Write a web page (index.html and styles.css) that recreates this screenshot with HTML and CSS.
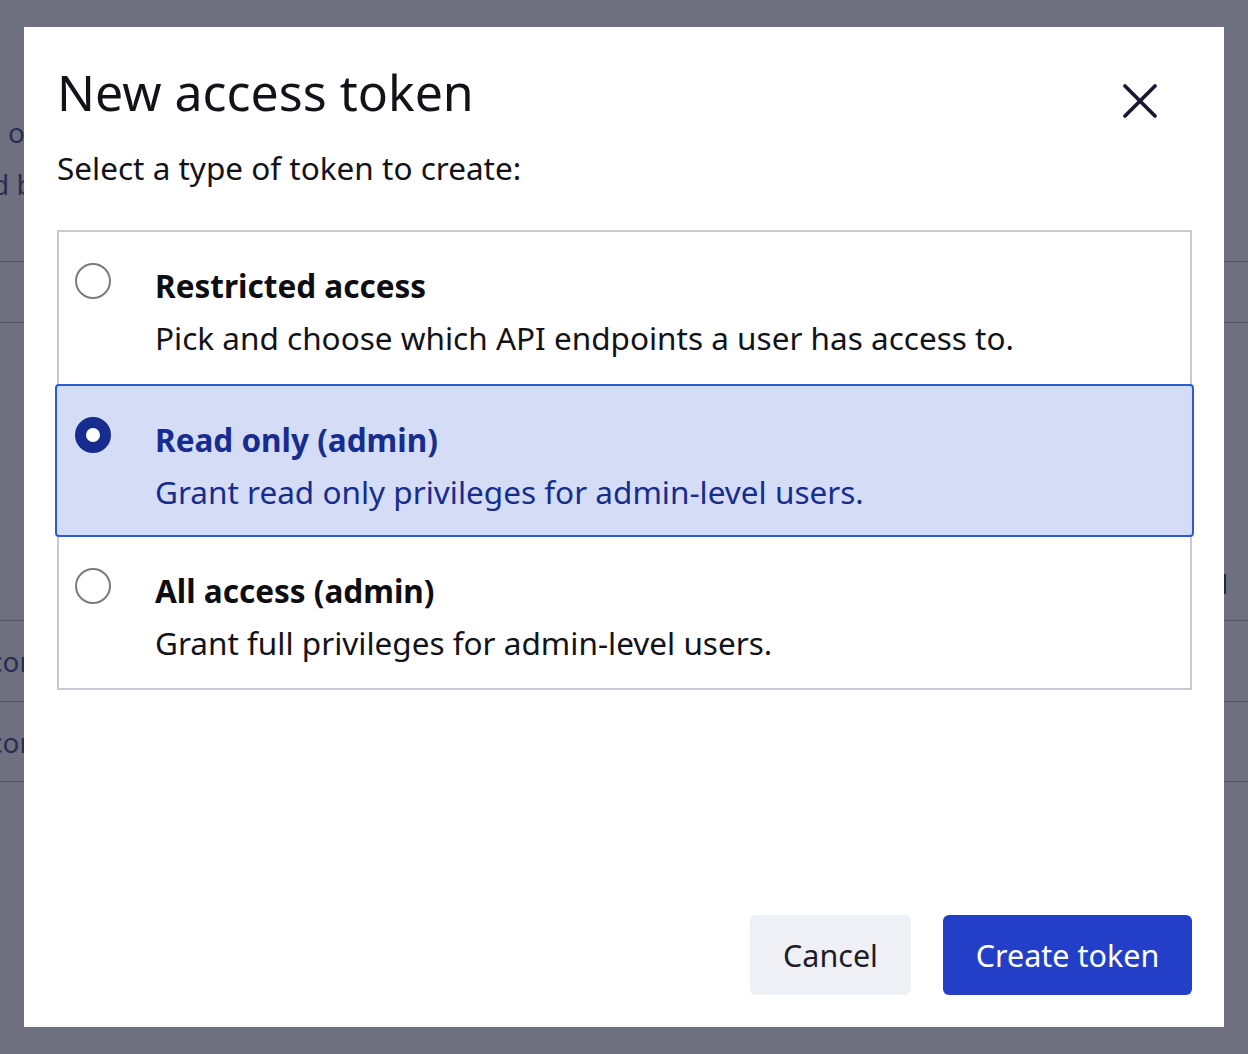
FILE: index.html
```html
<!DOCTYPE html>
<html lang="en">
<head>
<meta charset="utf-8">
<title>New access token</title>
<link rel="stylesheet" href="styles.css">
</head>
<body>
<div class="page">
  <p class="page-text line-a">of</p>
  <p class="page-text line-b">d b</p>
  <div class="page-table">
    <div class="page-row row-head"></div>
    <div class="page-row row-body"><span class="page-mark"></span></div>
    <div class="page-row row-item"><span class="cell">cor</span></div>
    <div class="page-row row-item"><span class="cell">cor</span></div>
  </div>
</div>

<div class="overlay">
  <div class="modal" role="dialog" aria-labelledby="modal-title">
    <div class="modal-header">
      <h1 id="modal-title" class="modal-title">New access token</h1>
      <button class="close-btn" aria-label="Close">
        <svg width="36" height="36" viewBox="0 0 36 36" fill="none" stroke="#191933" stroke-width="3.8" stroke-linecap="round">
          <path d="M3 3 L33 33 M33 3 L3 33"/>
        </svg>
      </button>
    </div>
    <p class="modal-sub">Select a type of token to create:</p>

    <div class="options">
      <label class="option">
        <span class="radio"></span>
        <span class="option-text">
          <span class="option-title">Restricted access</span>
          <span class="option-desc">Pick and choose which API endpoints a user has access to.</span>
        </span>
      </label>
      <label class="option selected">
        <span class="radio checked"></span>
        <span class="option-text">
          <span class="option-title">Read only (admin)</span>
          <span class="option-desc">Grant read only privileges for admin-level users.</span>
        </span>
      </label>
      <label class="option">
        <span class="radio"></span>
        <span class="option-text">
          <span class="option-title">All access (admin)</span>
          <span class="option-desc">Grant full privileges for admin-level users.</span>
        </span>
      </label>
    </div>

    <div class="modal-footer">
      <button class="btn btn-secondary">Cancel</button>
      <button class="btn btn-primary">Create token</button>
    </div>
  </div>
</div>
</body>
</html>
```
FILE: styles.css
```css
* { box-sizing: border-box; }

html, body {
  margin: 0;
  padding: 0;
  width: 1248px;
  height: 1054px;
  overflow: hidden;
}

body {
  font-family: "Noto Sans", "Open Sans", sans-serif;
  background: #ffffff;
  color: #121212;
}

/* Background page (mostly hidden by the overlay and modal) */
.page {
  padding-top: 106px;
}
.page-text {
  margin: 0;
  font-size: 28px;
  line-height: 52px;
  color: #4a4d86;
  white-space: nowrap;
}
.line-a { margin-left: 8px; }
.line-b { margin-left: -8px; }

.page-table {
  margin-top: 51px;
}
.page-row {
  border-top: 1px solid #b8bac6;
}
.row-head { height: 61px; }
.row-body { height: 298px; }
.row-item { height: 81px; }
.page-table .page-row:last-child {
  border-bottom: 1px solid #b8bac6;
}
.page-mark {
  display: block;
  width: 2px;
  height: 20px;
  margin-left: 1224px;
  margin-top: 251px;
  background: #3a3d62;
}
.cell {
  display: block;
  margin-left: -11px;
  font-size: 28px;
  line-height: 80px;
  color: #4a4d86;
}

/* Overlay */
.overlay {
  position: fixed;
  inset: 0;
  background: rgba(22, 25, 48, 0.62);
  display: flex;
  align-items: flex-start;
  justify-content: center;
  padding-top: 27px;
}

.modal {
  width: 1200px;
  height: 1000px;
  background: #ffffff;
  padding: 35px 32px 32px 33px;
  display: flex;
  flex-direction: column;
}

.modal-header {
  display: flex;
  justify-content: space-between;
  align-items: flex-start;
}

.modal-title {
  margin: 0;
  font-size: 50px;
  font-weight: 400;
  line-height: 60px;
  color: #121218;
}

.close-btn {
  border: 0;
  background: none;
  padding: 0;
  margin-top: 21px;
  margin-right: 34px;
  width: 36px;
  height: 36px;
  cursor: pointer;
  display: flex;
}

.modal-sub {
  margin: 26px 0 0;
  font-size: 31.5px;
  line-height: 40px;
  color: #121218;
}

.options {
  margin-top: 42px;
  border: 2px solid #c8c9d4;
  display: flex;
  flex-direction: column;
}

.option {
  display: flex;
  align-items: flex-start;
  height: 152px;
  padding: 31px 16px 0 16px;
  cursor: pointer;
}

.option.selected {
  height: 153px;
  margin: 0 -4px;
  padding: 31px 18px 0 18px;
  background: #d5ddf6;
  border: 2px solid #2a5bd0;
  border-radius: 4px;
}

.option:last-child {
  height: 151px;
}

.radio {
  flex: none;
  width: 36px;
  height: 36px;
  border-radius: 50%;
  border: 2px solid #7a7a80;
  background: #fff;
}

.radio.checked {
  border: 11px solid #172c8f;
}

.option-text {
  display: flex;
  flex-direction: column;
  margin-left: 44px;
  margin-top: 3px;
}

.option-title {
  font-size: 31.5px;
  font-weight: 700;
  line-height: 40px;
  color: #0d0d12;
}

.option-desc {
  margin-top: 12px;
  font-size: 31.5px;
  line-height: 40px;
  color: #121218;
}

.option.selected .option-title,
.option.selected .option-desc {
  color: #172c8f;
}

.modal-footer {
  margin-top: auto;
  display: flex;
  justify-content: flex-end;
  gap: 32px;
}

.btn {
  height: 80px;
  border: 0;
  border-radius: 6px;
  font-family: inherit;
  font-size: 30.5px;
  padding: 0;
  cursor: pointer;
}

.btn-secondary {
  width: 161px;
  background: #eff0f5;
  color: #1d1d28;
}

.btn-primary {
  width: 249px;
  background: #233fc8;
  color: #ffffff;
}
```
